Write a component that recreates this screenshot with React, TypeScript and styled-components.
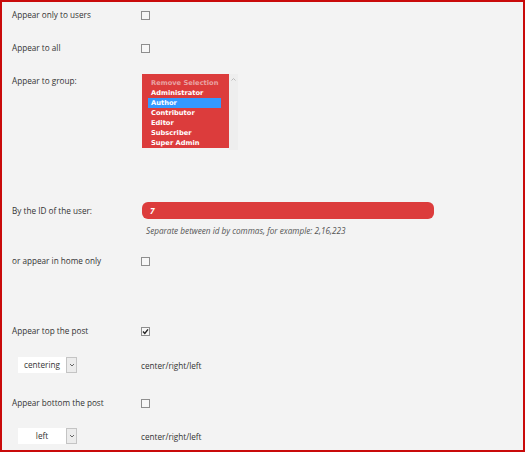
import * as React from 'react';
import styled, { createGlobalStyle } from 'styled-components';

const GlobalStyle = createGlobalStyle`
  html, body {
    margin: 0;
    padding: 0;
    background: #f3f3f3;
  }
`;

const groups = ['Administrator', 'Author', 'Contributor', 'Editor', 'Subscriber', 'Super Admin'];

const Frame = styled.div`
  box-sizing: border-box;
  width: 525px;
  height: 452px;
  border: 2px solid #c90a0a;
  background: #f3f3f3;
  padding: 7px 0 0 10px;
  font-family: 'Open Sans', 'Liberation Sans', sans-serif;
  font-size: 8.2px;
  line-height: 12px;
  color: #333;
`;

const Row = styled.div<{ $top: number; $align?: string }>`
  display: grid;
  grid-template-columns: 129px 1fr;
  align-items: ${(p) => p.$align ?? 'center'};
  margin-top: ${(p) => p.$top}px;
`;

const Label = styled.div<{ $pad?: number }>`
  padding-top: ${(p) => p.$pad ?? 0}px;
  white-space: nowrap;
`;

const Box = styled.span`
  display: flex;
  align-items: center;
  justify-content: center;
  box-sizing: border-box;
  width: 9px;
  height: 9px;
  border: 1px solid #8e8e8e;
  background: #f7f7f7;
`;

const ListWrap = styled.div`
  display: flex;
  margin-left: 1px;
`;

const List = styled.div`
  box-sizing: border-box;
  width: 87px;
  height: 74px;
  padding: 4px 8px 0 6px;
  background: #dc3c3c;
  font-family: 'DejaVu Sans', Verdana, sans-serif;
  font-weight: bold;
  font-size: 6.7px;
  line-height: 10px;
  color: #fff;
`;

const Option = styled.div<{ $selected?: boolean; $muted?: boolean }>`
  padding-left: 3px;
  white-space: nowrap;
  background: ${(p) => (p.$selected ? '#3399ff' : 'transparent')};
  color: ${(p) => (p.$muted ? '#e9a2a2' : '#fff')};
`;

const Scroll = styled.div`
  width: 9px;
  height: 76px;
  background: #eeeeee;
  display: flex;
  justify-content: center;
  padding-top: 4px;
  box-sizing: border-box;
`;

const Stack = styled.div`
  display: flex;
  flex-direction: column;
`;

const TextInput = styled.div`
  box-sizing: border-box;
  width: 292px;
  height: 17px;
  margin-left: 1px;
  padding-left: 8px;
  border-radius: 6px;
  background: #dc3c3c;
  color: #fff;
  font-weight: bold;
  font-style: italic;
  display: flex;
  align-items: center;
`;

const Help = styled.div`
  margin-top: 6px;
  padding-left: 5px;
  font-style: italic;
  color: #555;
  white-space: nowrap;
`;

const Dropdown = styled.div`
  display: flex;
  height: 16px;
  margin-left: 6px;
  width: 59px;
`;

const DropValue = styled.div`
  flex: 1;
  background: #fff;
  display: flex;
  align-items: center;
  justify-content: center;
  color: #333;
`;

const DropButton = styled.div`
  box-sizing: border-box;
  width: 11px;
  background: #ececec;
  border: 1px solid #c4c4c4;
  display: flex;
  align-items: center;
  justify-content: center;
`;

const Hint = styled.div`
  padding-top: 2px;
`;

const Checkbox = ({ checked }: { checked?: boolean }) => (
  <Box>
    {checked && (
      <svg width="7" height="7" viewBox="0 0 7 7">
        <path d="M1 3.6 L2.8 5.4 L6 1.4" stroke="#222" strokeWidth="1.4" fill="none" />
      </svg>
    )}
  </Box>
);

const Select = ({ value }: { value: string }) => (
  <Dropdown>
    <DropValue>{value}</DropValue>
    <DropButton>
      <svg width="6" height="4" viewBox="0 0 6 4">
        <path d="M1 1 L3 3 L5 1" stroke="#666" strokeWidth="1" fill="none" />
      </svg>
    </DropButton>
  </Dropdown>
);

export default function App() {
  return (
    <Frame>
      <GlobalStyle />
      <Row $top={0}>
        <Label>Appear only to users</Label>
        <Checkbox />
      </Row>
      <Row $top={21}>
        <Label>Appear to all</Label>
        <Checkbox />
      </Row>
      <Row $top={20} $align="start">
        <Label $pad={1}>Appear to group:</Label>
        <ListWrap>
          <List>
            <Option $muted>Remove Selection</Option>
            {groups.map((g) => (
              <Option key={g} $selected={g === 'Author'}>
                {g}
              </Option>
            ))}
          </List>
          <Scroll>
            <svg width="5" height="3" viewBox="0 0 5 3">
              <path d="M0.5 2.5 L2.5 0.5 L4.5 2.5" stroke="#b9b9b9" strokeWidth="1" fill="none" />
            </svg>
          </Scroll>
        </ListWrap>
      </Row>
      <Row $top={52} $align="start">
        <Label $pad={3}>By the ID of the user:</Label>
        <Stack>
          <TextInput>7</TextInput>
          <Help>Separate between id by commas, for example: 2,16,223</Help>
        </Stack>
      </Row>
      <Row $top={18}>
        <Label>or appear in home only</Label>
        <Checkbox />
      </Row>
      <Row $top={58}>
        <Label>Appear top the post</Label>
        <Checkbox checked />
      </Row>
      <Row $top={20}>
        <Select value="centering" />
        <Hint>center/right/left</Hint>
      </Row>
      <Row $top={24}>
        <Label>Appear bottom the post</Label>
        <Checkbox />
      </Row>
      <Row $top={19}>
        <Select value="left" />
        <Hint>center/right/left</Hint>
      </Row>
    </Frame>
  );
}
